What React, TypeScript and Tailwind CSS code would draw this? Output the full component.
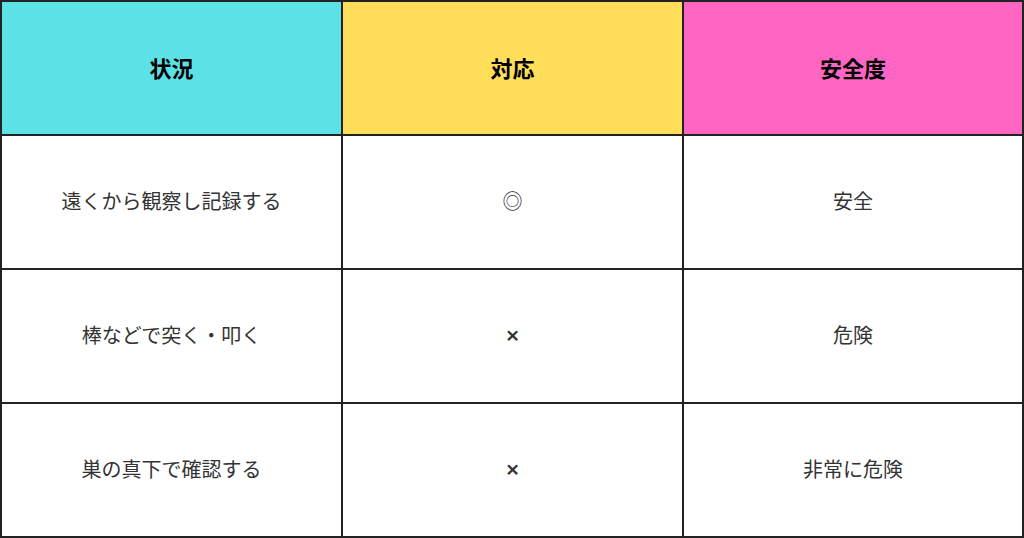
import React from "react";

const rows = [
  ["遠くから観察し記録する", "◎", "安全"],
  ["棒などで突く・叩く", "×", "危険"],
  ["巣の真下で確認する", "×", "非常に危険"],
];

export default function App() {
  return (
    <div
      className="w-[1024px] h-[538px] bg-white"
      style={{ fontFamily: '"Noto Sans CJK JP", sans-serif' }}
    >
      <div className="grid grid-cols-[339px_339px_338px] grid-rows-[132px_132px_132px_132px] gap-[2px] p-[2px] bg-[#222] w-[1024px] h-[538px]">
        <div className="bg-[#5ce1e6] flex items-center justify-center text-[22px] leading-none font-bold text-black pb-[2px]">状況</div>
        <div className="bg-[#ffde59] flex items-center justify-center text-[22px] leading-none font-bold text-black pb-[2px]">対応</div>
        <div className="bg-[#ff66c4] flex items-center justify-center text-[22px] leading-none font-bold text-black pb-[2px]">安全度</div>
        {rows.map((r, i) =>
          r.map((c, j) => (
            <div
              key={`${i}-${j}`}
              className="bg-white flex items-center justify-center text-[20px] leading-none text-[#333] pb-[2px]"
            >
              {c === "×" ? (
                <span className="font-semibold text-[24px] leading-none" style={{ fontFamily: '"Noto Sans", sans-serif' }}>×</span>
              ) : (
                c
              )}
            </div>
          ))
        )}
      </div>
    </div>
  );
}
